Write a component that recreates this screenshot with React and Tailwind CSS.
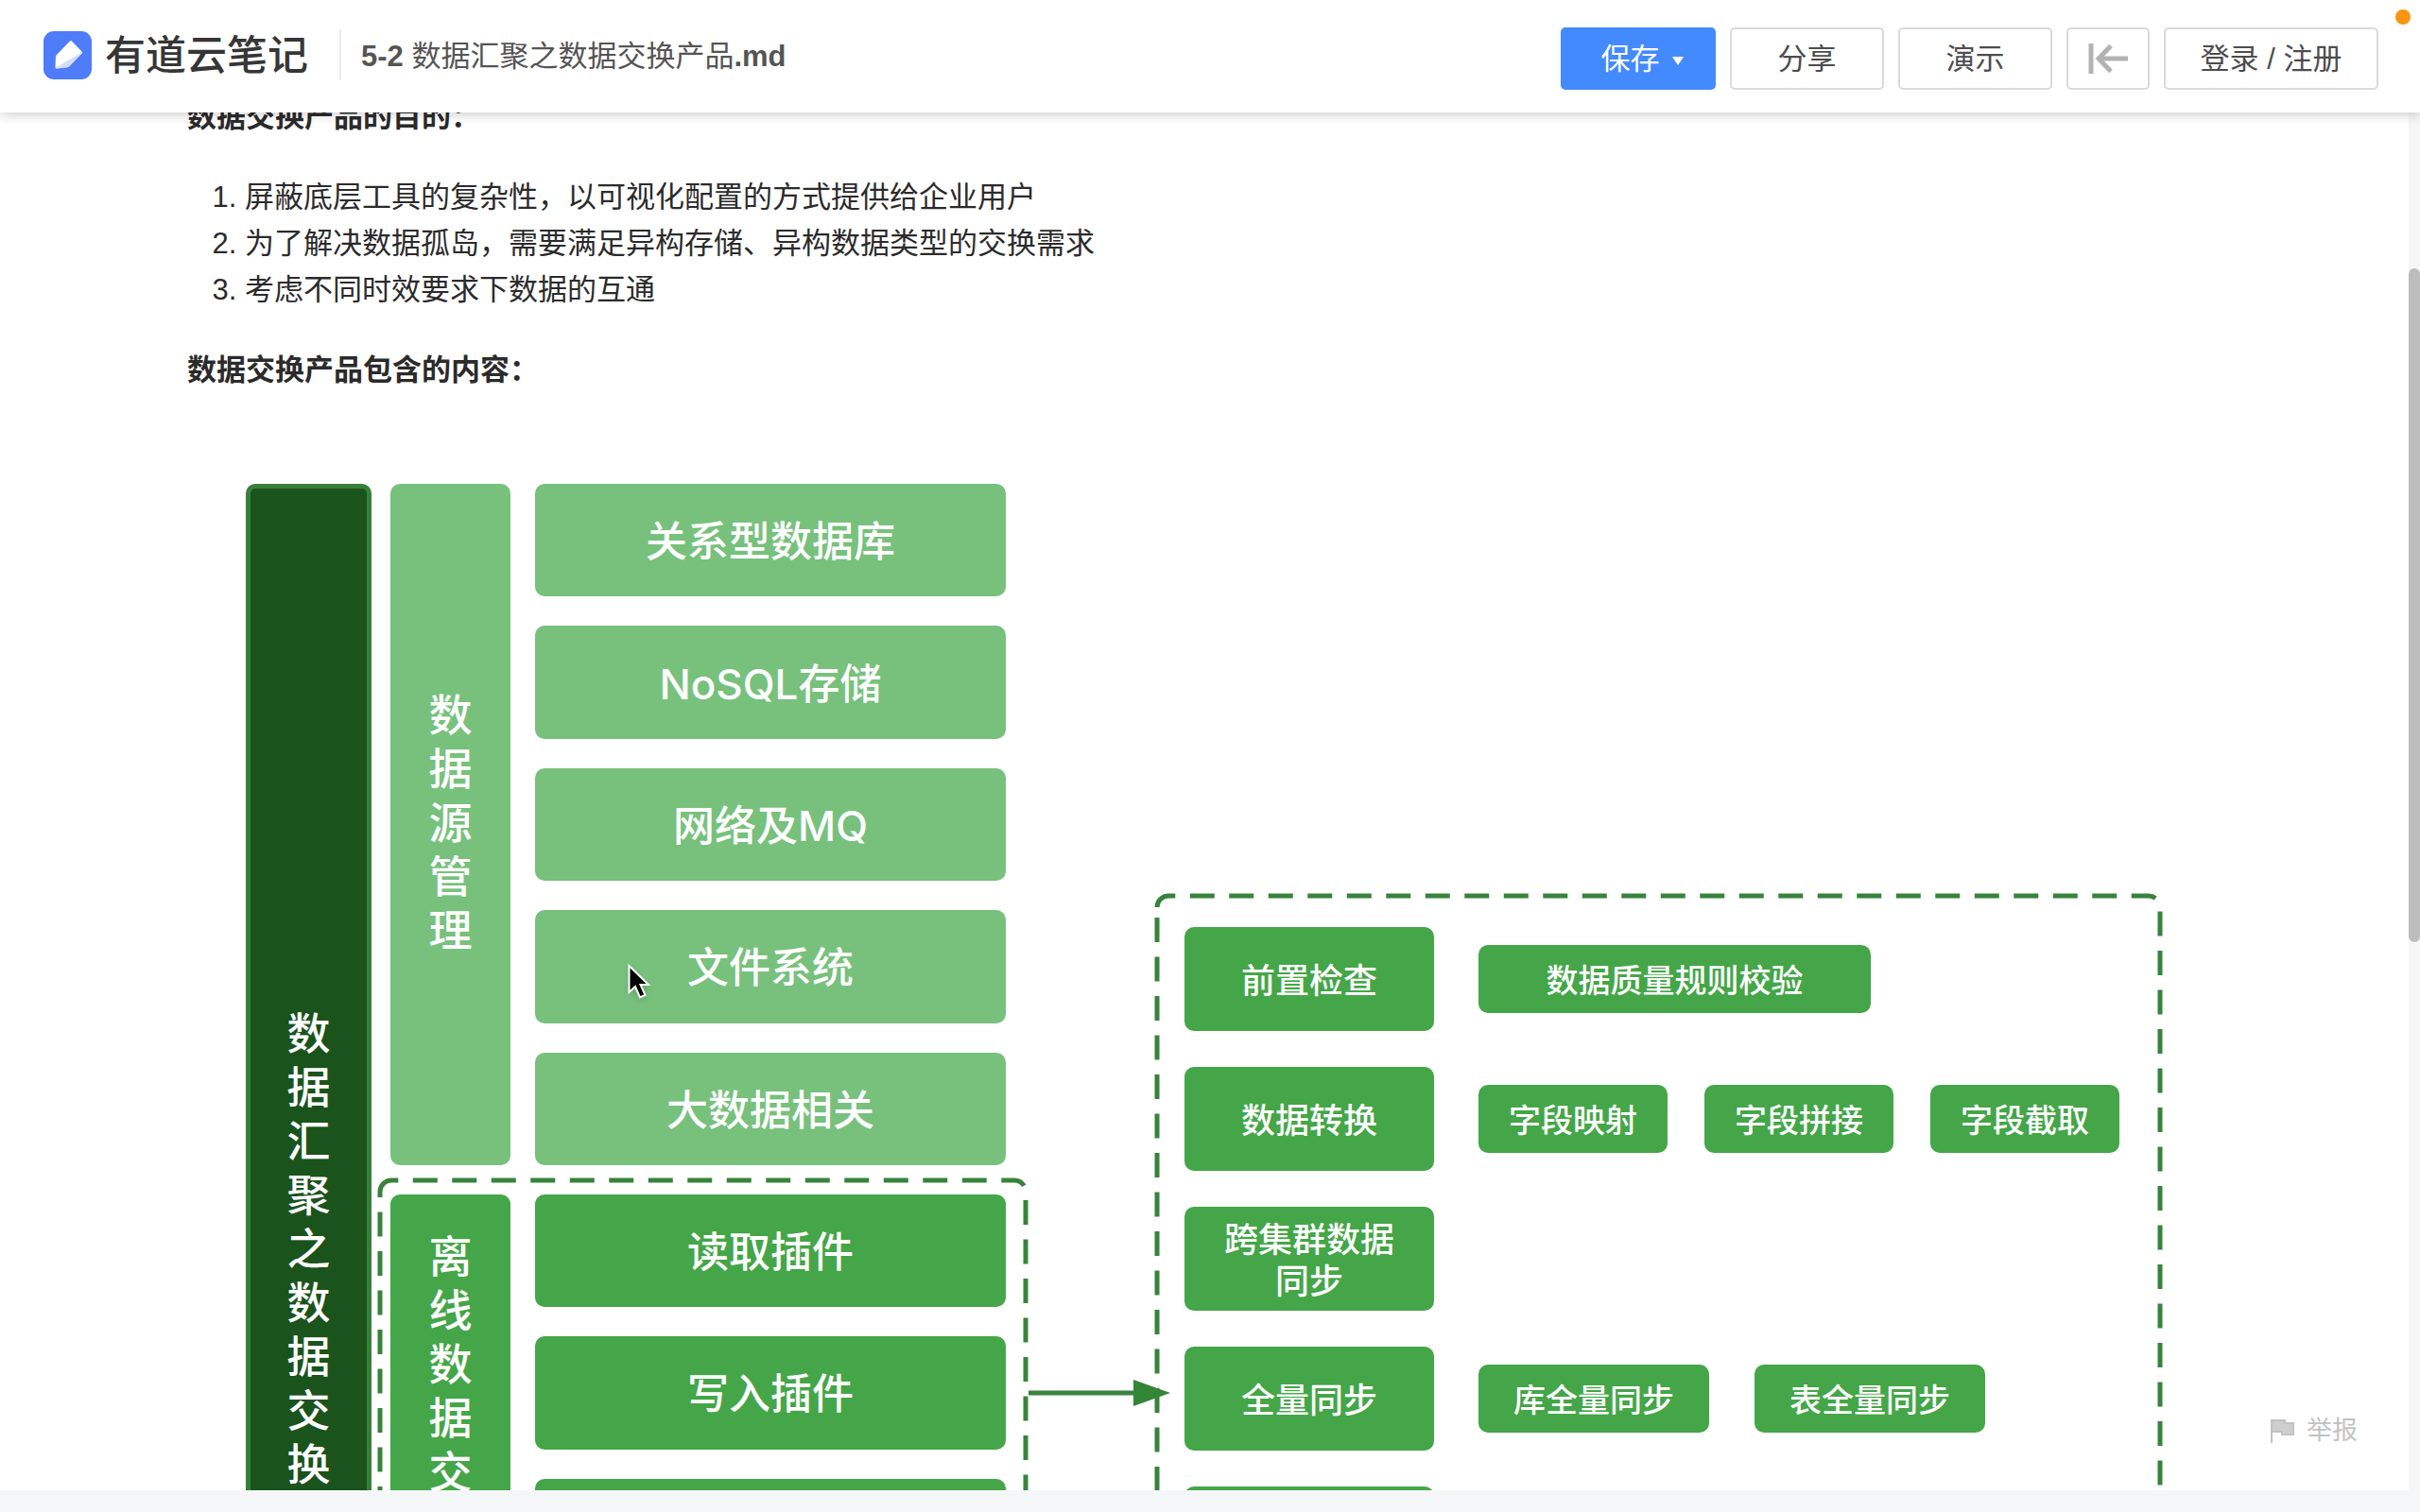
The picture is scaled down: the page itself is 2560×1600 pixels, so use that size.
const goals = [
  "屏蔽底层工具的复杂性，以可视化配置的方式提供给企业用户",
  "为了解决数据孤岛，需要满足异构存储、异构数据类型的交换需求",
  "考虑不同时效要求下数据的互通",
];

const sources = ["关系型数据库", "NoSQL存储", "网络及MQ", "文件系统", "大数据相关"];

const plugins = ["读取插件", "写入插件", ""];

const steps = [
  { name: "前置检查", items: ["数据质量规则校验"], itemClass: "w-[415px]", gap: "gap-[39px]" },
  { name: "数据转换", items: ["字段映射", "字段拼接", "字段截取"], itemClass: "w-[200px]", gap: "gap-[39px]" },
  { name: "跨集群数据同步", items: [], itemClass: "", gap: "gap-[39px]" },
  { name: "全量同步", items: ["库全量同步", "表全量同步"], itemClass: "w-[244px]", gap: "gap-[48px]" },
  { name: "", items: [], itemClass: "", gap: "gap-[39px]" },
];

function Logo() {
  return (
    <a href="#" className="flex items-center gap-[14px]">
      <svg viewBox="0 0 51 51" className="size-[51px]">
        <rect width="51" height="51" rx="11" fill="#4f7cfb" />
        <path d="M13 26 L28 10.500 Q29 9.500 30 10.500 L40.500 21.500 Q41.500 22.500 40.500 23.500 L27.500 37 Q26.500 38 25 38.200 L14 39.500 Q12.500 39.500 12.500 38 Z" fill="#fff" />
        <path d="M12.800 38.800 L40.800 22 Q41.300 22.800 40.500 23.500 L27.500 37 Q26.500 38 25 38.200 L14 39.500 Q13 39.500 12.800 38.800 Z" fill="#d3defe" />
      </svg>
      <span className="pt-[2px] text-[43px] leading-[52px] font-medium text-[#363636]">有道云笔记</span>
    </a>
  );
}

function HeaderButton({ className, children, ...rest }) {
  return (
    <button
      type="button"
      className={`flex h-[66px] items-center justify-center rounded-[5px] border-2 border-[#dadada] bg-white text-[31px] text-[#4d4d4d] ${className}`}
      {...rest}
    >
      {children}
    </button>
  );
}

function Header() {
  return (
    <header className="absolute inset-x-0 top-0 z-10 flex h-[119px] items-center bg-white pb-[3px] pl-[46px] pr-[44px] shadow-[0_2px_12px_rgba(0,0,0,0.2)]">
      <Logo />
      <div className="ml-[33px] mr-[21px] h-[54px] w-[2px] bg-[#ededed]" />
      <h1 className="pt-[3px] text-[31px] leading-[49px] text-[#555]">
        <b>5-2</b> 数据汇聚之数据交换产品<b>.md</b>
      </h1>

      <div className="ml-auto flex gap-[15px] pt-[8px]">
        <button
          type="button"
          className="flex h-[66px] w-[164px] items-center justify-center gap-[13px] rounded-[5px] bg-[#448aff] pl-2 pt-[2px] text-[31px] text-white"
        >
          保存
          <svg viewBox="0 0 12 9" className="mt-[2px] h-[9px] w-[12px]">
            <path d="M0 0 H12 L6 9 Z" fill="#fff" />
          </svg>
        </button>
        <HeaderButton className="w-[163px] pt-[2px]">分享</HeaderButton>
        <HeaderButton className="w-[163px] pt-[2px]">演示</HeaderButton>
        <HeaderButton className="w-[88px]" aria-label="收起">
          <svg viewBox="0 0 42 34" className="h-[34px] w-[42px]" fill="none" stroke="#b3b3b3" strokeWidth="5">
            <path d="M3 1 V33" />
            <path d="M24 3.500 L11 17 L24 30.500" />
            <path d="M12 17 H42" />
          </svg>
        </HeaderButton>
        <HeaderButton className="w-[227px] pt-[2px]">登录 / 注册</HeaderButton>
      </div>

      <span className="absolute right-[10px] top-[10px] size-4 rounded-full bg-[#fb9410]" />
    </header>
  );
}

// The outline starts under the top left corner and runs clockwise
function DashedFrame({ width, height, className }) {
  return (
    <svg width={width} height={height} className={`absolute overflow-visible ${className}`}>
      <path
        d={`M0 12 A12 12 0 0 1 12 0 H${width - 12} A12 12 0 0 1 ${width} 12 V${height - 12} A12 12 0 0 1 ${width - 12} ${height} H12 A12 12 0 0 1 0 ${height - 12} Z`}
        fill="none"
        stroke="#38833c"
        strokeWidth="5"
        strokeDasharray="26 15.5"
      />
    </svg>
  );
}

function VerticalLabel({ text, className }) {
  return (
    <div className={`flex shrink-0 items-center justify-center rounded-[10px] text-[46px] leading-[57px] ${className}`}>
      <span className="w-[46px] break-all text-center">{text}</span>
    </div>
  );
}

function Rows({ items, className, boxClass }) {
  return (
    <div className={`grid w-[498px] gap-[31px] ${className}`}>
      {items.map((item, i) => (
        <div key={i} className={`flex items-center justify-center rounded-[10px] pt-1 text-[44px] ${boxClass}`}>
          {item}
        </div>
      ))}
    </div>
  );
}

function Diagram() {
  return (
    <div className="relative ml-[62px] mt-[96px] flex items-start font-medium text-white">
      <VerticalLabel text="数据汇聚之数据交换产品" className="h-[1733px] w-[133px] border-[5px] border-[#37803a] bg-[#1b531d]" />

      <div className="ml-[20px] flex shrink-0 flex-col gap-[31px]">
        <div className="flex h-[721px] gap-[26px]">
          <VerticalLabel text="数据源管理" className="w-[127px] bg-[#77c17d] pb-1" />
          <Rows items={sources} className="grid-rows-5" boxClass="bg-[#77c17d]" />
        </div>
        <div className="relative flex h-[420px] gap-[26px]">
          <DashedFrame width={683} height={451} className="-left-[11px] -top-[15px]" />
          <VerticalLabel text="离线数据交换" className="w-[127px] bg-[#44a648] pb-1" />
          <Rows items={plugins} className="grid-rows-3" boxClass="bg-[#44a648]" />
        </div>
      </div>

      <div className="relative ml-[160px] mt-[436px] flex w-[1061px] shrink-0 flex-col gap-[38px] pl-[29px] pt-[33px]">
        <DashedFrame width={1061} height={794} className="left-0 top-0" />
        <svg viewBox="0 0 150 28" className="absolute -left-[136px] top-[512px] h-[28px] w-[150px]">
          <path d="M0 14 H112" stroke="#38833c" strokeWidth="5" />
          <path d="M111 0 L150 14 L111 28 Z" fill="#338537" />
        </svg>
        {steps.map((step, i) => (
          <div key={i} className="flex items-center gap-[47px]">
            <div className="flex h-[110px] w-[264px] items-center justify-center rounded-[10px] bg-[#44a648] px-8 pt-[3px] text-center text-[36px] leading-[44px]">
              {step.name}
            </div>
            <div className={`flex ${step.gap}`}>
              {step.items.map((item) => (
                <div
                  key={item}
                  className={`flex h-[72px] items-center justify-center rounded-[10px] bg-[#44a648] pt-[3px] text-[34px] ${step.itemClass}`}
                >
                  {item}
                </div>
              ))}
            </div>
          </div>
        ))}
      </div>

      {/* mouse pointer */}
      <svg viewBox="0 0 24 38" className="absolute left-[404px] top-[508px] h-[38px] w-[24px] drop-shadow-md">
        <path d="M1.500 2 V30 L8 24 L13 35.500 L18.500 33 L13.500 22 H22 Z" fill="#000" stroke="#fff" strokeWidth="2" />
      </svg>
    </div>
  );
}

export default function App() {
  return (
    <div className="relative flex h-screen flex-col overflow-hidden bg-white font-['Liberation_Sans','Noto_Sans_CJK_SC',sans-serif] text-[#2b2b2b]">
      <Header />

      <main className="flex min-h-0 flex-1">
        <article className="min-w-0 flex-1 overflow-hidden pl-[198px] pt-[99px] text-[31px] leading-[49px]">
          <h2 className="font-bold">数据交换产品的目的：</h2>
          <ol className="my-[36px] list-decimal pl-[61px]">
            {goals.map((goal) => (
              <li key={goal}>{goal}</li>
            ))}
          </ol>
          <h2 className="font-bold">数据交换产品包含的内容：</h2>
          <div className="font-['Inter','Noto_Sans_CJK_SC',sans-serif]">
            <Diagram />
          </div>
        </article>
        <div className="w-3 bg-[#f6f6f6] pt-[284px]">
          <div className="h-[713px] rounded-full bg-[#bdbdbd]" />
        </div>
      </main>

      <a href="#" className="absolute bottom-[66px] right-[66px] flex items-center gap-[13px] text-[27px] leading-[40px] text-[#c2c2c2]">
        <svg viewBox="0 0 25 25" className="size-[25px]">
          <path d="M1 0 V25" stroke="#c2c2c2" strokeWidth="2" />
          <path d="M1 1 H15 V4 H24 V16 H12 V13 H1 Z" fill="#cfcfcf" stroke="#c2c2c2" strokeWidth="2" />
        </svg>
        举报
      </a>

      <footer className="h-[23px] bg-[#f5f6f8]" />
    </div>
  );
}
